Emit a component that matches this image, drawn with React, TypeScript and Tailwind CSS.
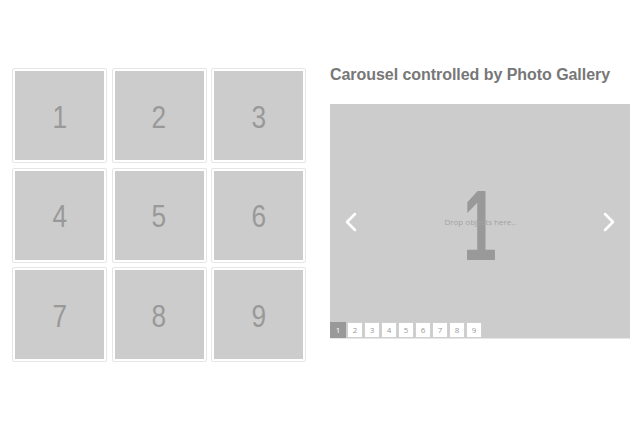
import React from 'react';

const tiles = [1, 2, 3, 4, 5, 6, 7, 8, 9];

const Tile: React.FC<{ n: number }> = ({ n }) => (
    <div className="w-[95px] h-[95px] border border-[#e6e6e6] p-[2px] bg-white rounded-[2px]">
        <div className="w-full h-full bg-[#cccccc] flex items-center justify-center">
            <span className="text-[32px] text-[#999999] leading-none scale-x-[0.82] translate-y-[1px]" style={{ fontFamily: '"Liberation Sans Narrow", "Liberation Sans", Arial, sans-serif' }}>
                {n}
            </span>
        </div>
    </div>
);

const Chevron: React.FC<{ dir: 'left' | 'right' }> = ({ dir }) => (
    <svg width="14" height="22" viewBox="0 0 14 22" fill="none" stroke="#ffffff" strokeWidth="2.5" strokeLinecap="round" strokeLinejoin="round">
        {dir === 'left' ? <path d="M11 3 L3 11 L11 19" /> : <path d="M3 3 L11 11 L3 19" />}
    </svg>
);

export default function App() {
    return (
        <div className="w-[640px] h-[430px] bg-white flex items-start pt-[68px] pl-[12px] gap-[24px]" style={{ fontFamily: '"Liberation Sans", Arial, sans-serif' }}>
            <div className="grid grid-cols-3 gap-x-[4.5px] gap-y-[4.5px] w-[294px]">
                {tiles.map(n => (
                    <Tile key={n} n={n} />
                ))}
            </div>

            <div className="flex flex-col -mt-[3px]">
                <h2 className="text-[16px] leading-[20px] font-bold text-[#777777] tracking-[-0.05px]">Carousel controlled by Photo Gallery</h2>
                <div className="relative mt-[19px] w-[300px] h-[235px] bg-[#cccccc] border-b border-[#e6e6e6] flex items-center justify-center overflow-hidden">
                    <span className="absolute left-[14px] top-[107px]"><Chevron dir="left" /></span>
                    <span className="absolute right-[14px] top-[107px]"><Chevron dir="right" /></span>
                    <span className="text-[100px] font-bold text-[#999999] leading-none scale-x-[0.6] translate-y-[4px]" style={{ fontFamily: '"Liberation Sans Narrow", "Liberation Sans", Arial, sans-serif' }}>1</span>
                    <span className="absolute inset-0 flex items-center justify-center text-[8px] text-[#a3a3a3] pt-[2px]" style={{ fontFamily: '"Open Sans", sans-serif' }}>Drop objects here..</span>
                    <div className="absolute left-0 bottom-0 flex gap-[1px]">
                        {tiles.map(n => (
                            <div
                                key={n}
                                className={
                                    n === 1
                                        ? 'w-[16px] h-[16px] bg-[#999999] text-white text-[8px] flex items-center justify-center'
                                        : 'w-[16px] h-[16px] bg-white border border-[#cfcfcf] text-[#999999] text-[8px] flex items-center justify-center'
                                }
                                style={{ fontFamily: '"Open Sans", sans-serif' }}
                            >
                                {n}
                            </div>
                        ))}
                    </div>
                </div>
            </div>
        </div>
    );
}
